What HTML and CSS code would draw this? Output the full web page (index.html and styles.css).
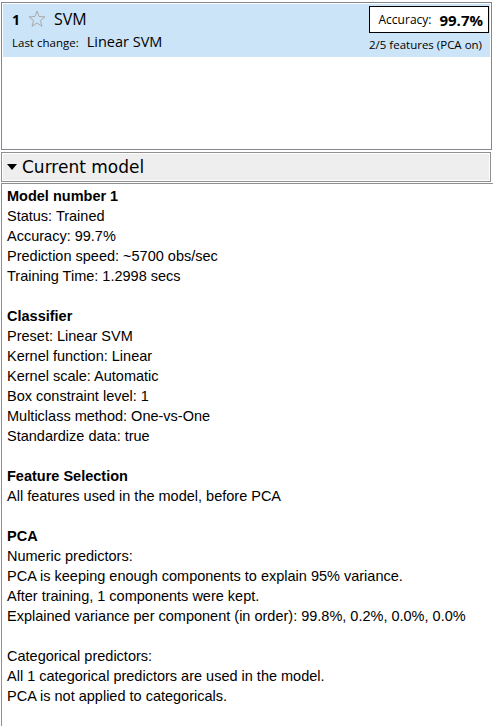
FILE: index.html
```html
<!DOCTYPE html>
<html>
<head>
<meta charset="utf-8">
<link rel="stylesheet" href="styles.css">
</head>
<body>
<div class="history">
  <div class="model-row">
    <div class="row-left">
      <div class="title-line">
        <span class="num">1</span>
        <svg class="star" width="18" height="18" viewBox="0 0 18 18"><polygon points="9,1 11.1,6.6 17,6.8 12.4,10.5 14,16.4 9,13 4,16.4 5.6,10.5 1,6.8 6.9,6.6" fill="none" stroke="#a9a9a9" stroke-width="1"/></svg>
        <span class="name">SVM</span>
      </div>
      <div class="change-line">
        <span class="change-label">Last change:</span>
        <span class="change-value">Linear SVM</span>
      </div>
    </div>
    <div class="row-right">
      <div class="acc-box"><span class="acc-label">Accuracy:</span><span class="acc-value">99.7%</span></div>
      <div class="features">2/5 features (PCA on)</div>
    </div>
  </div>
</div>
<div class="section-header">
  <span class="tri"></span>
  <span class="header-text">Current model</span>
</div>
<div class="details">
  <p class="bold">Model number 1</p>
  <p>Status: Trained</p>
  <p>Accuracy: 99.7%</p>
  <p>Prediction speed: ~5700 obs/sec</p>
  <p>Training Time: 1.2998 secs</p>
  <p class="blank"></p>
  <p class="bold">Classifier</p>
  <p>Preset: Linear SVM</p>
  <p>Kernel function: Linear</p>
  <p>Kernel scale: Automatic</p>
  <p>Box constraint level: 1</p>
  <p>Multiclass method: One-vs-One</p>
  <p>Standardize data: true</p>
  <p class="blank"></p>
  <p class="bold">Feature Selection</p>
  <p>All features used in the model, before PCA</p>
  <p class="blank"></p>
  <p class="bold">PCA</p>
  <p>Numeric predictors:</p>
  <p>PCA is keeping enough components to explain 95% variance.</p>
  <p>After training, 1 components were kept.</p>
  <p>Explained variance per component (in order): 99.8%, 0.2%, 0.0%, 0.0%</p>
  <p class="blank"></p>
  <p>Categorical predictors:</p>
  <p>All 1 categorical predictors are used in the model.</p>
  <p>PCA is not applied to categoricals.</p>
</div>
</body>
</html>
```
FILE: styles.css
```css
html, body {
  margin: 0;
  padding: 0;
  background: #ffffff;
}
body {
  width: 493px;
  height: 727px;
  overflow: hidden;
  font-family: "Liberation Sans", Arial, sans-serif;
  color: #000;
}
.history {
  margin: 2px 1px 0 1px;
  border: 1px solid #828790;
  height: 144px;
  padding: 1px;
  background: #fff;
}
.model-row {
  background: #cce4f7;
  height: 53px;
  display: flex;
  justify-content: space-between;
  font-family: "Open Sans", "Noto Sans", sans-serif;
}
.row-left {
  padding: 4px 0 0 9px;
}
.title-line {
  display: flex;
  align-items: center;
  height: 22px;
}
.num {
  font-weight: bold;
  font-size: 14px;
  margin-right: 8px;
}
.star {
  margin-right: 8px;
}
.name {
  font-size: 16px;
}
.change-line {
  display: flex;
  align-items: baseline;
  margin-top: 2px;
}
.change-label {
  font-size: 11.5px;
  margin-right: 8px;
}
.change-value {
  font-size: 14.5px;
}
.row-right {
  display: flex;
  flex-direction: column;
  align-items: flex-end;
  padding: 2px 1px 0 0;
}
.acc-box {
  border: 1px solid #000;
  background: #fff;
  height: 27px;
  width: 120px;
  box-sizing: border-box;
  display: flex;
  align-items: center;
  justify-content: flex-end;
  padding-right: 5px;
  gap: 8px;
}
.acc-label {
  font-size: 12px;
}
.acc-value {
  font-size: 15px;
  font-weight: bold;
}
.features {
  font-size: 11.5px;
  margin-top: 4px;
  margin-right: 7px;
}
.section-header {
  margin: 2px 2px 0 1px;
  height: 30px;
  box-sizing: border-box;
  border: 1px solid #8f8f8f;
  box-shadow: inset 1px 1px 0 #fff, inset -1px -1px 0 #fff;
  background: #eeeeee;
  display: flex;
  align-items: center;
  padding-left: 5px;
}
.tri {
  width: 0;
  height: 0;
  border-left: 5px solid transparent;
  border-right: 5px solid transparent;
  border-top: 6px solid #000;
  margin-right: 5px;
}
.header-text {
  font-family: "DejaVu Sans", sans-serif;
  font-size: 17px;
}
.details {
  margin: 1px 0 0 1px;
  border-top: 1px solid #8f8f8f;
  border-left: 1px solid #8f8f8f;
  padding: 2px 0 0 5px;
  height: 540px;
  font-size: 14.5px;
}
.details p {
  margin: 0;
  height: 20px;
  line-height: 20px;
  white-space: nowrap;
}
.details .bold {
  font-weight: bold;
}
```
